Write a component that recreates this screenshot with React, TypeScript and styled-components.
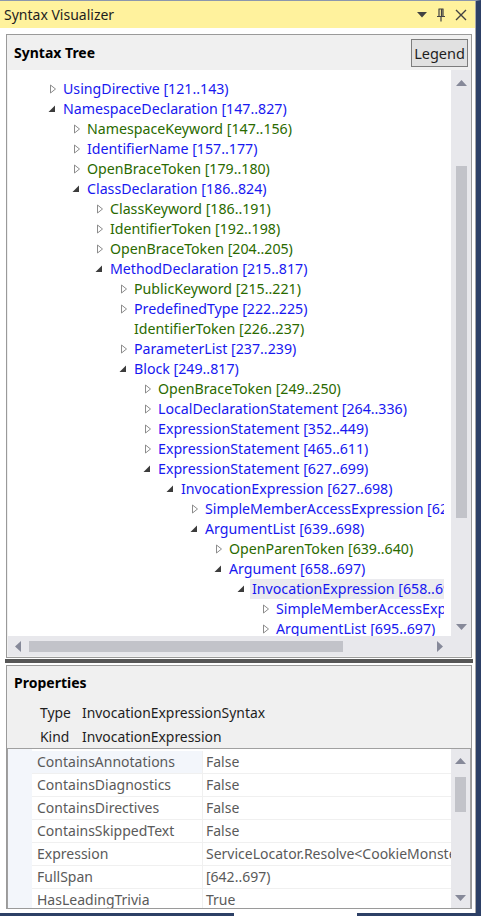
import styled, { createGlobalStyle } from 'styled-components'

const GlobalStyle = createGlobalStyle`
  html, body {
    margin: 0;
    padding: 0;
    background: #ffffff;
  }
  body {
    font-family: 'Segoe UI', 'Noto Sans', 'Open Sans', sans-serif;
  }
`

type Expander = 'open' | 'closed' | 'none'
type NodeKind = 'node' | 'token'

interface TreeItem {
  level: number
  text: string
  kind: NodeKind
  expander: Expander
  selected?: boolean
}

const treeItems: TreeItem[] = [
  { level: 0, text: 'UsingDirective [121..143)', kind: 'node', expander: 'closed' },
  { level: 0, text: 'NamespaceDeclaration [147..827)', kind: 'node', expander: 'open' },
  { level: 1, text: 'NamespaceKeyword [147..156)', kind: 'token', expander: 'closed' },
  { level: 1, text: 'IdentifierName [157..177)', kind: 'node', expander: 'closed' },
  { level: 1, text: 'OpenBraceToken [179..180)', kind: 'token', expander: 'closed' },
  { level: 1, text: 'ClassDeclaration [186..824)', kind: 'node', expander: 'open' },
  { level: 2, text: 'ClassKeyword [186..191)', kind: 'token', expander: 'closed' },
  { level: 2, text: 'IdentifierToken [192..198)', kind: 'token', expander: 'closed' },
  { level: 2, text: 'OpenBraceToken [204..205)', kind: 'token', expander: 'closed' },
  { level: 2, text: 'MethodDeclaration [215..817)', kind: 'node', expander: 'open' },
  { level: 3, text: 'PublicKeyword [215..221)', kind: 'token', expander: 'closed' },
  { level: 3, text: 'PredefinedType [222..225)', kind: 'node', expander: 'closed' },
  { level: 3, text: 'IdentifierToken [226..237)', kind: 'token', expander: 'none' },
  { level: 3, text: 'ParameterList [237..239)', kind: 'node', expander: 'closed' },
  { level: 3, text: 'Block [249..817)', kind: 'node', expander: 'open' },
  { level: 4, text: 'OpenBraceToken [249..250)', kind: 'token', expander: 'closed' },
  { level: 4, text: 'LocalDeclarationStatement [264..336)', kind: 'node', expander: 'closed' },
  { level: 4, text: 'ExpressionStatement [352..449)', kind: 'node', expander: 'closed' },
  { level: 4, text: 'ExpressionStatement [465..611)', kind: 'node', expander: 'closed' },
  { level: 4, text: 'ExpressionStatement [627..699)', kind: 'node', expander: 'open' },
  { level: 5, text: 'InvocationExpression [627..698)', kind: 'node', expander: 'open' },
  { level: 6, text: 'SimpleMemberAccessExpression [627..638)', kind: 'node', expander: 'closed' },
  { level: 6, text: 'ArgumentList [639..698)', kind: 'node', expander: 'open' },
  { level: 7, text: 'OpenParenToken [639..640)', kind: 'token', expander: 'closed' },
  { level: 7, text: 'Argument [658..697)', kind: 'node', expander: 'open' },
  { level: 8, text: 'InvocationExpression [658..697)', kind: 'node', expander: 'open', selected: true },
  { level: 9, text: 'SimpleMemberAccessExpression [658..694)', kind: 'node', expander: 'closed' },
  { level: 9, text: 'ArgumentList [695..697)', kind: 'node', expander: 'closed' },
]

const gridRows: [string, string][] = [
  ['ContainsAnnotations', 'False'],
  ['ContainsDiagnostics', 'False'],
  ['ContainsDirectives', 'False'],
  ['ContainsSkippedText', 'False'],
  ['Expression', 'ServiceLocator.Resolve<CookieMonster>().Eat'],
  ['FullSpan', '[642..697)'],
  ['HasLeadingTrivia', 'True'],
]

const Window = styled.div`
  width: 481px;
  height: 916px;
  display: flex;
  flex-direction: column;
  box-sizing: border-box;
  border-top: 1px solid #8c97ad;
  border-right: 5px solid #2d4066;
  overflow: hidden;
  background: #ffffff;
`

const TitleBar = styled.div`
  height: 27px;
  flex: none;
  display: flex;
  align-items: center;
  padding: 0 8px 0 4px;
  background: #fff29d;
  border-right: 1px solid #a8a8a8;
`

const Title = styled.div`
  flex: 1;
  font-size: 14px;
  color: #1e1e1e;
  padding-bottom: 1px;
`

const TitleIcons = styled.div`
  display: flex;
  align-items: center;
  gap: 9px;
`

const Body = styled.div`
  flex: 1;
  display: flex;
  flex-direction: column;
  padding: 6px 3px 0 6px;
  min-height: 0;
  border-right: 1px solid #a8a8a8;
`

const Panel = styled.div<{ $height: number }>`
  height: ${({ $height }) => $height}px;
  flex: none;
  box-sizing: border-box;
  border: 1px solid #9a9a9a;
  background: #f0f0f0;
  display: flex;
  flex-direction: column;
  overflow: hidden;
`

const PanelHeader = styled.div`
  height: 35px;
  flex: none;
  display: flex;
  align-items: center;
  justify-content: space-between;
  padding: 0 3px 0 7px;
`

const HeaderText = styled.div`
  font-size: 14px;
  font-weight: 700;
  color: #000000;
`

const LegendButton = styled.button`
  height: 28px;
  width: 57px;
  padding: 0;
  border: 1px solid #7d7d7d;
  background: #e1e1e1;
  font-family: inherit;
  font-size: 14.5px;
  color: #1e1e1e;
`

const TreeArea = styled.div`
  flex: 1;
  display: grid;
  grid-template-columns: 1fr 20px;
  grid-template-rows: 1fr 20px;
  margin: 0 0 1px 1px;
  min-height: 0;
`

const TreeViewport = styled.div`
  background: #ffffff;
  padding: 9px 7px 0 0;
  overflow: hidden;
`

const TreeClip = styled.div`
  height: 100%;
  overflow: hidden;
`

const Row = styled.div<{ $indent: number }>`
  height: 20px;
  display: flex;
  align-items: center;
  padding-left: ${({ $indent }) => $indent}px;
  white-space: nowrap;
`

const ExpanderBox = styled.span`
  width: 16px;
  flex: none;
  display: flex;
  align-items: center;
`

const Label = styled.span<{ $kind: NodeKind; $selected?: boolean }>`
  font-size: 14.2px;
  line-height: 20px;
  padding: 0 2px;
  margin-left: -2px;
  color: ${({ $kind }) => ($kind === 'token' ? '#2a6a00' : '#1818f0')};
  background: ${({ $selected }) => ($selected ? '#ebebef' : 'transparent')};
  flex: ${({ $selected }) => ($selected ? '1' : 'none')};
`

const VScroll = styled.div`
  background: #e8e8ec;
  display: flex;
  flex-direction: column;
  align-items: center;
  padding: 10px 0 6px;
  box-sizing: border-box;
`

const Thumb = styled.div<{ $top: number; $height: number }>`
  width: 11px;
  height: ${({ $height }) => $height}px;
  margin-top: ${({ $top }) => $top}px;
  background: #c2c3c9;
`

const Spacer = styled.div`
  flex: 1;
`

const HScroll = styled.div`
  background: #e8e8ec;
  display: flex;
  align-items: center;
  padding: 0 8px 0 7px;
`

const HThumb = styled.div`
  height: 11px;
  width: 314px;
  margin-left: 8px;
  background: #c2c3c9;
`

const Corner = styled.div`
  background: #e8e8ec;
`

const Splitter = styled.div`
  height: 7px;
  flex: none;
  margin: 0 -1px;
  background-image: radial-gradient(circle, #505050 0.7px, transparent 0.9px);
  background-size: 2px 2px;
  background-position: 0 1px;
  background-repeat: repeat-x;
  position: relative;
  &::after {
    content: '';
    position: absolute;
    left: 0;
    right: 0;
    top: 3px;
    height: 2px;
    background-image: radial-gradient(circle, #505050 0.7px, transparent 0.9px);
    background-size: 2px 2px;
    background-position: 1px 0;
  }
`

const PropsHeader = styled.div`
  height: 34px;
  flex: none;
  display: flex;
  align-items: center;
  padding: 0 7px 1px;
  box-sizing: border-box;
`

const InfoRow = styled.div`
  height: 24px;
  flex: none;
  display: grid;
  grid-template-columns: 42px 1fr;
  align-items: center;
  padding-left: 33px;
  font-size: 13.9px;
  color: #1e1e1e;
`

const Grid = styled.div`
  flex: 1;
  min-height: 0;
  border: 1px solid #a0a0a0;
  border-bottom: none;
  background: #ffffff;
  display: grid;
  grid-template-columns: 1fr 19px;
  overflow: hidden;
`

const GridRows = styled.div`
  padding-top: 2px;
  overflow: hidden;
  background: linear-gradient(to right, #f3f6fb 24px, #ffffff 24px);
`

const GridRow = styled.div`
  height: 23px;
  display: grid;
  grid-template-columns: 24px 171px 1fr;
  font-size: 14px;
  color: #5a5a5a;
  white-space: nowrap;
`

const Gutter = styled.div``

const NameCell = styled.div<{ $selected?: boolean }>`
  padding-left: 5px;
  line-height: 22px;
  border-bottom: 1px solid #f0f0f0;
  border-right: 1px solid #f0f0f0;
  background: ${({ $selected }) => ($selected ? '#f3f6fb' : '#ffffff')};
  overflow: hidden;
`

const ValueCell = styled.div`
  padding-left: 3px;
  line-height: 22px;
  border-bottom: 1px solid #f0f0f0;
  overflow: hidden;
`

const GridScroll = styled.div`
  background: #e8e8ec;
  display: flex;
  flex-direction: column;
  align-items: center;
  padding: 9px 0 7px;
`

const BottomStrip = styled.div`
  height: 8px;
  flex: none;
  display: flex;
  align-items: flex-end;
  margin: 0 -4px 0 -6px;
`

const TabBar = styled.div<{ $width: number; $gap?: number }>`
  height: 4px;
  width: ${({ $width }) => $width}px;
  margin-left: ${({ $gap }) => $gap ?? 0}px;
  background: #2d4066;
`

const UpArrow = () => (
  <svg width="11" height="6" viewBox="0 0 11 6">
    <path d="M0 6 L5.5 0 L11 6 Z" fill="#868999" />
  </svg>
)

const DownArrow = () => (
  <svg width="11" height="6" viewBox="0 0 11 6">
    <path d="M0 0 L5.5 6 L11 0 Z" fill="#868999" />
  </svg>
)

const LeftArrow = () => (
  <svg width="6" height="11" viewBox="0 0 6 11">
    <path d="M6 0 L0 5.5 L6 11 Z" fill="#868999" />
  </svg>
)

const RightArrow = () => (
  <svg width="6" height="11" viewBox="0 0 6 11">
    <path d="M0 0 L6 5.5 L0 11 Z" fill="#868999" />
  </svg>
)

const ExpanderGlyph = ({ type }: { type: Expander }) => {
  if (type === 'closed') {
    return (
      <svg width="8" height="10" viewBox="0 0 8 10" style={{ marginLeft: 2 }}>
        <path d="M1.5 1 L6.5 5 L1.5 9 Z" fill="none" stroke="#8c8c8c" strokeWidth="1" />
      </svg>
    )
  }
  if (type === 'open') {
    return (
      <svg width="8" height="8" viewBox="0 0 8 8" style={{ marginLeft: 1 }}>
        <path d="M7 0.5 L7 7 L0.5 7 Z" fill="#3c3c3c" />
      </svg>
    )
  }
  return null
}

const DropIcon = () => (
  <svg width="10" height="6" viewBox="0 0 10 6">
    <path d="M0 0 L10 0 L5 5.5 Z" fill="#424242" />
  </svg>
)

const PinIcon = () => (
  <svg width="10" height="14" viewBox="0 0 10 14">
    <path d="M2.5 1 H7.5 M3 1 V8 M7 1 V8 M5.5 1.5 V8 M1 8.5 H9 M5 8.5 V13.5" stroke="#424242" strokeWidth="1.2" fill="none" />
  </svg>
)

const CloseIcon = () => (
  <svg width="12" height="12" viewBox="0 0 12 12">
    <path d="M1 1 L11 11 M11 1 L1 11" stroke="#424242" strokeWidth="1.4" />
  </svg>
)

const App = () => {
  return (
    <>
      <GlobalStyle />
      <Window>
        <TitleBar>
          <Title>Syntax Visualizer</Title>
          <TitleIcons>
            <DropIcon />
            <PinIcon />
            <CloseIcon />
          </TitleIcons>
        </TitleBar>
        <Body>
          <Panel $height={624}>
            <PanelHeader>
              <HeaderText>Syntax Tree</HeaderText>
              <LegendButton>Legend</LegendButton>
            </PanelHeader>
            <TreeArea>
              <TreeViewport>
                <TreeClip>
                  {treeItems.map((item, i) => (
                    <Row key={i} $indent={Math.round(39 + item.level * 23.67)}>
                      <ExpanderBox>
                        <ExpanderGlyph type={item.expander} />
                      </ExpanderBox>
                      <Label $kind={item.kind} $selected={item.selected}>
                        {item.text}
                      </Label>
                    </Row>
                  ))}
                </TreeClip>
              </TreeViewport>
              <VScroll>
                <UpArrow />
                <Thumb $top={80} $height={352} />
                <Spacer />
                <DownArrow />
              </VScroll>
              <HScroll>
                <LeftArrow />
                <HThumb />
                <Spacer />
                <RightArrow />
              </HScroll>
              <Corner />
            </TreeArea>
          </Panel>
          <Splitter />
          <Panel $height={244}>
            <PropsHeader>
              <HeaderText>Properties</HeaderText>
            </PropsHeader>
            <InfoRow>
              <span>Type</span>
              <span>InvocationExpressionSyntax</span>
            </InfoRow>
            <InfoRow>
              <span>Kind</span>
              <span>InvocationExpression</span>
            </InfoRow>
            <Grid>
              <GridRows>
                {gridRows.map(([name, value], i) => (
                  <GridRow key={name}>
                    <Gutter />
                    <NameCell $selected={i === 0}>{name}</NameCell>
                    <ValueCell>{value}</ValueCell>
                  </GridRow>
                ))}
              </GridRows>
              <GridScroll>
                <UpArrow />
                <Thumb $top={13} $height={35} />
                <Spacer />
                <DownArrow />
              </GridScroll>
            </Grid>
          </Panel>
          <BottomStrip>
            <TabBar $width={237} />
            <TabBar $width={121} $gap={123} />
          </BottomStrip>
        </Body>
      </Window>
    </>
  )
}

export default App
